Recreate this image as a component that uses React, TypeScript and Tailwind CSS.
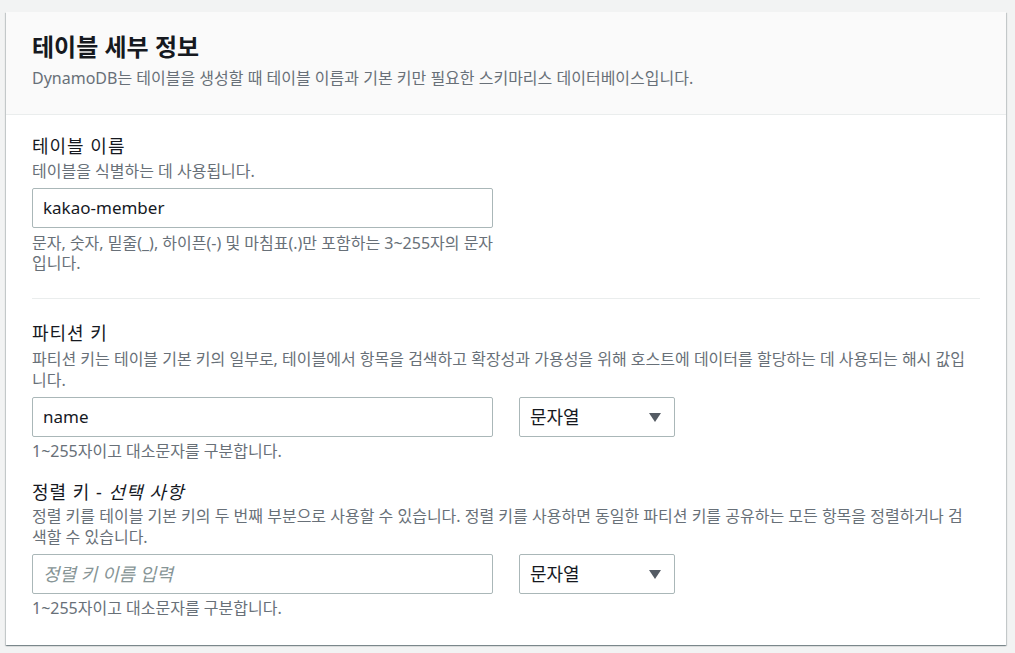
import React from "react";

const font = "font-['Noto_Sans','Noto_Sans_CJK_KR',sans-serif]";

function Select() {
  return (
    <div className="w-[156px] h-[40px] box-border border border-[#aab7b8] rounded-[2px] bg-white flex items-center justify-between pl-[10px] pr-[13px]">
      <span className="text-[18px] text-[#16191f] leading-[22px]">문자열</span>
      <svg width="12" height="9" viewBox="0 0 12 9">
        <path d="M0 0 L12 0 L6 9 Z" fill="#545b64" />
      </svg>
    </div>
  );
}

export default function App() {
  return (
    <div className={`min-h-screen bg-[#f2f3f3] pt-[12px] pb-[8px] ${font}`}>
      <div className="ml-[6px] w-[1000px] bg-white shadow-[0_1px_1px_0_rgba(0,28,36,0.3),1px_1px_1px_0_rgba(0,28,36,0.15),-1px_1px_1px_0_rgba(0,28,36,0.15)]">
        <div className="bg-[#fafafa] border-b border-[#eaeded] px-[26px] pt-[21px] pb-[26px]">
          <h2 className="text-[24px] font-bold leading-[28px] text-[#16191f]">테이블 세부 정보</h2>
          <p className="mt-[7px] text-[16px] leading-[20px] text-[#687078]">
            DynamoDB는 테이블을 생성할 때 테이블 이름과 기본 키만 필요한 스키마리스 데이터베이스입니다.
          </p>
        </div>
        <div className="px-[26px] pt-[20px] pb-[28px] flex flex-col">
          <div className="text-[18px] tracking-[1px] leading-[22px] text-[#16191f]">테이블 이름</div>
          <div className="mt-[4px] text-[16px] leading-[20px] text-[#687078]">테이블을 식별하는 데 사용됩니다.</div>
          <div className="mt-[7px] w-[461px] h-[40px] box-border border border-[#aab7b8] rounded-[2px] flex items-center pl-[10px] text-[17px] text-[#16191f]">
            kakao-member
          </div>
          <div className="mt-[5px] whitespace-nowrap text-[16px] leading-[20px] text-[#687078]">
            문자, 숫자, 밑줄(_), 하이픈(-) 및 마침표(.)만 포함하는 3~255자의 문자
            <br />
            입니다.
          </div>
          <div className="mt-[25px] h-px bg-[#eaeded]" />

          <div className="mt-[23px] text-[18px] tracking-[1px] leading-[22px] text-[#16191f]">파티션 키</div>
          <div className="mt-[5px] whitespace-nowrap text-[16px] leading-[20.5px] text-[#687078]">
            파티션 키는 테이블 기본 키의 일부로, 테이블에서 항목을 검색하고 확장성과 가용성을 위해 호스트에 데이터를 할당하는 데 사용되는 해시 값입
            <br />
            니다.
          </div>
          <div className="mt-[7px] flex gap-[26px]">
            <div className="w-[461px] h-[40px] box-border border border-[#aab7b8] rounded-[2px] flex items-center pl-[10px] text-[17px] text-[#16191f]">
              name
            </div>
            <Select />
          </div>
          <div className="mt-[5px] text-[16px] leading-[18px] text-[#687078]">1~255자이고 대소문자를 구분합니다.</div>

          <div className="mt-[21px] text-[18px] tracking-[1px] leading-[22px] text-[#16191f]">
            정렬 키 - <span className="italic">선택 사항</span>
          </div>
          <div className="mt-[3px] whitespace-nowrap text-[16px] leading-[20.5px] text-[#687078]">
            정렬 키를 테이블 기본 키의 두 번째 부분으로 사용할 수 있습니다. 정렬 키를 사용하면 동일한 파티션 키를 공유하는 모든 항목을 정렬하거나 검
            <br />
            색할 수 있습니다.
          </div>
          <div className="mt-[7px] flex gap-[26px]">
            <div className="w-[461px] h-[40px] box-border border border-[#aab7b8] rounded-[2px] flex items-center pl-[10px] text-[18px] italic text-[#879596]">
              정렬 키 이름 입력
            </div>
            <Select />
          </div>
          <div className="mt-[5px] text-[16px] leading-[18px] text-[#687078]">1~255자이고 대소문자를 구분합니다.</div>
        </div>
      </div>
    </div>
  );
}
